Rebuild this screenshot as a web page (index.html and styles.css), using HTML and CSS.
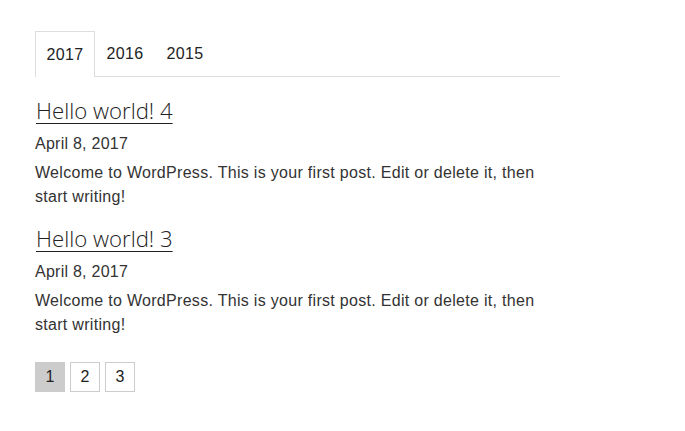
FILE: index.html
```html
<!DOCTYPE html>
<html>
<head>
<meta charset="utf-8">
<link rel="stylesheet" href="styles.css">
</head>
<body>
<div class="wrap">
  <ul class="tabs">
    <li class="tab active">2017</li>
    <li class="tab">2016</li>
    <li class="tab">2015</li>
  </ul>
  <div class="post">
    <h2 class="title"><a href="#">Hello world! 4</a></h2>
    <div class="date">April 8, 2017</div>
    <p class="excerpt">Welcome to WordPress. This is your first post. Edit or delete it, then start writing!</p>
  </div>
  <div class="post">
    <h2 class="title"><a href="#">Hello world! 3</a></h2>
    <div class="date">April 8, 2017</div>
    <p class="excerpt">Welcome to WordPress. This is your first post. Edit or delete it, then start writing!</p>
  </div>
  <div class="pager">
    <span class="page current">1</span>
    <span class="page">2</span>
    <span class="page">3</span>
  </div>
</div>
</body>
</html>
```
FILE: styles.css
```css
body {
  margin: 0;
  background: #fff;
  font-family: "Liberation Sans", Arial, sans-serif;
  color: #333;
}
.wrap {
  width: 525px;
  padding: 31px 0 0 35px;
}
.tabs {
  list-style: none;
  margin: 0;
  padding: 0;
  display: flex;
  border-bottom: 1px solid #ddd;
}
.tab {
  width: 60px;
  height: 44px;
  box-sizing: border-box;
  display: flex;
  align-items: center;
  justify-content: center;
  font-size: 16px;
  letter-spacing: 0.3px;
  color: #222;
  border: 1px solid transparent;
  border-bottom: none;
  margin-bottom: -1px;
}
.tab.active {
  border-color: #ddd;
  background: #fff;
  height: 46px;
}
.post {
  margin-top: 19px;
}
.post + .post {
  margin-top: 15px;
}
.title {
  margin: 0 0 6px;
  padding-left: 1px;
  font-family: "Open Sans", "Liberation Sans", sans-serif;
  font-size: 22.2px;
  font-weight: 300;
  line-height: 30px;
}
.title a {
  color: #222;
  text-decoration: underline;
  text-underline-offset: 4px;
  text-decoration-thickness: 1px;
}
.date {
  font-size: 16px;
  line-height: 24px;
  letter-spacing: 0.25px;
  color: #333;
}
.excerpt {
  margin: 5px 0 0;
  font-size: 16px;
  line-height: 24px;
  letter-spacing: 0.3px;
  color: #333;
}
.pager {
  display: flex;
  gap: 5px;
  margin-top: 25px;
}
.page {
  width: 30px;
  height: 30px;
  box-sizing: border-box;
  border: 1px solid #ccc;
  display: flex;
  align-items: center;
  justify-content: center;
  font-size: 16px;
  color: #222;
}
.page.current {
  background: #ccc;
  border-color: #ccc;
}
```
